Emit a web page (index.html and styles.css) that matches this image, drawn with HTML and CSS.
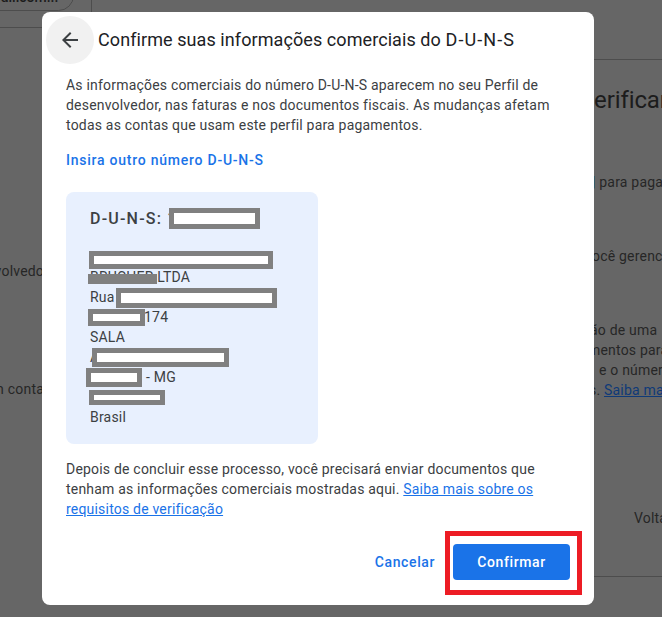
FILE: index.html
```html
<!DOCTYPE html>
<html lang="pt-BR">
<head>
<meta charset="utf-8">
<title>Confirme suas informações comerciais do D-U-N-S</title>
<link rel="stylesheet" href="styles.css">
</head>
<body>
<div class="page">
  <div class="backdrop" aria-hidden="true">
    <div class="bg-pill"><span class="bg-pill-text">ailicom...</span></div>
    <div class="bg-vline"></div>
    <div class="bg-hline-left"></div>
    <div class="bg-hline-top"></div>
    <div class="bg-hline-bottom"></div>
    <div class="bg-text bg-l1">desenvolvedor</div>
    <div class="bg-text bg-l2">em conta</div>
    <div class="bg-text bg-heading">erificar</div>
    <div class="bg-text bg-r1"><span class="bg-blue">|</span> para pagamentos</div>
    <div class="bg-text bg-r2">ocê gerencia</div>
    <div class="bg-text bg-r3">ão de uma</div>
    <div class="bg-text bg-r4">mentos para</div>
    <div class="bg-text bg-r5">e o número</div>
    <div class="bg-text bg-r6">s. <span class="bg-link">Saiba mais</span></div>
    <div class="bg-text bg-volta">Voltar</div>
  </div>

  <section class="dialog">
    <header class="dialog-header">
      <button class="back" aria-label="Voltar">
        <svg width="24" height="24" viewBox="0 0 24 24"><path d="M20 11H7.83l5.59-5.59L12 4l-8 8 8 8 1.41-1.41L7.83 13H20v-2z"/></svg>
      </button>
      <h1 class="title">Confirme suas informações comerciais do <span class="title-duns">D-U-N-S</span></h1>
    </header>
    <div class="dialog-body">
      <p class="intro">As informações comerciais do número D-U-N-S aparecem no seu Perfil de desenvolvedor, nas faturas e nos documentos fiscais. As mudanças afetam todas as contas que usam este perfil para pagamentos.</p>
      <a class="other-link">Insira outro número D-U-N-S</a>
      <div class="card">
        <div class="duns">D-U-N-S: 1</div>
        <div class="address">
          <div>&nbsp;</div>
          <div>BRUCHER LTDA</div>
          <div>Rua</div>
          <div class="after-r5">174</div>
          <div>SALA</div>
          <div>A</div>
          <div class="after-r7">- MG</div>
          <div>&nbsp;</div>
          <div>Brasil</div>
        </div>
        <span class="redact r1"></span>
        <span class="redact r2"></span>
        <span class="redact-solid r3"></span>
        <span class="redact r4"></span>
        <span class="redact r5"></span>
        <span class="redact r6"></span>
        <span class="redact r7"></span>
        <span class="redact r8"></span>
      </div>
      <p class="note">Depois de concluir esse processo, você precisará enviar documentos que tenham as informações comerciais mostradas aqui. <a class="note-link">Saiba mais sobre os requisitos de verificação</a></p>
    </div>
    <footer class="dialog-actions">
      <button class="btn-text">Cancelar</button>
      <button class="btn-primary">Confirmar</button>
      <span class="highlight"></span>
    </footer>
  </section>
</div>
</body>
</html>
```

FILE: styles.css
```css
* { box-sizing: border-box; }
html, body { margin: 0; padding: 0; }
body { font-family: Roboto, "Liberation Sans", sans-serif; }

.page {
  position: relative;
  width: 662px;
  height: 617px;
  overflow: hidden;
  background: #666;
  padding: 12px 0 0 42px;
}

.backdrop { position: absolute; inset: 0; }
.bg-text {
  position: absolute;
  font: 400 14px/20px Roboto, sans-serif;
  letter-spacing: .2px;
  color: #262626;
  white-space: pre;
}
.bg-l1 { right: 613px; top: 261px; }
.bg-l2 { right: 618px; top: 379px; }
.bg-heading { left: 594px; top: 84px; font: 400 24px/32px Roboto, sans-serif; letter-spacing: -.1px; color: #1c1c1c; }
.bg-r1 { left: 592px; top: 172px; }
.bg-blue { color: #123a78; }
.bg-r2 { left: 592px; top: 246px; }
.bg-r3 { left: 590px; top: 320px; }
.bg-r4 { left: 588px; top: 340px; }
.bg-r5 { left: 599px; top: 360px; }
.bg-r6 { left: 589px; top: 380px; }
.bg-link { color: #0f3a78; text-decoration: underline; }
.bg-volta { left: 634px; top: 508px; }
.bg-pill {
  position: absolute;
  left: -20px; top: -20px;
  width: 94px; height: 31px;
  border: 1px solid #4d4d4d;
  border-radius: 16px;
  overflow: hidden;
}
.bg-pill-text {
  position: absolute;
  left: 20px; top: 6px;
  font: 500 14px/20px Roboto, sans-serif;
  color: #1c1c1c;
}
.bg-vline { position: absolute; left: 91px; top: 0; width: 1px; height: 12px; background: #4d4d4d; }
.bg-hline-left { position: absolute; left: 0; top: 27px; width: 42px; height: 1px; background: #4d4d4d; }
.bg-hline-top { position: absolute; left: 594px; top: 59px; right: 0; height: 1px; background: #4d4d4d; }
.bg-hline-bottom { position: absolute; left: 594px; top: 576px; right: 0; height: 1px; background: #4d4d4d; }

.dialog {
  position: relative;
  width: 552px;
  height: 593px;
  background: #fff;
  border-radius: 8px;
  display: flex;
  flex-direction: column;
}
.dialog-header {
  display: flex;
  align-items: center;
  gap: 4px;
  padding: 4px 0 0 4px;
}
.back {
  width: 48px;
  height: 48px;
  flex: none;
  border: 0;
  border-radius: 50%;
  background: #f1f1f1;
  display: flex;
  align-items: center;
  justify-content: center;
  padding: 0;
}
.back svg { fill: #3c4043; }
.title {
  margin: 0;
  font: 400 18px/24px Roboto, sans-serif;
  letter-spacing: .08px;
  color: #202124;
  white-space: nowrap;
}
.title-duns { letter-spacing: 1.1px; }
.dialog-body {
  padding: 11px 24px 0;
  flex: 1;
}
.intro {
  margin: 0 0 15px;
  font-size: 14px;
  line-height: 20px;
  letter-spacing: .2px;
  color: #3c4043;
}
.other-link {
  display: block;
  font-size: 14px;
  line-height: 20px;
  font-weight: 500;
  letter-spacing: .76px;
  color: #1a73e8;
}
.card {
  position: relative;
  margin-top: 22px;
  width: 252px;
  height: 252px;
  background: #e8f0fe;
  border-radius: 8px;
  padding: 17px 24px 0;
  color: #3c4043;
}
.duns {
  font-size: 16px;
  line-height: 20px;
  font-weight: 500;
  letter-spacing: 1.2px;
}
.address {
  margin-top: 18px;
  font-size: 14px;
  line-height: 20px;
  letter-spacing: .2px;
}
.after-r5 { padding-left: 54px; }
.after-r7 { padding-left: 56px; }
.redact, .redact-solid { position: absolute; background: #fff; border: 5px solid #808080; }
.redact-solid { background: #808080; border: 0; }
/* offsets below are measured from the card's top-left (66, 192) */
.r1 { left: 103px; top: 16px; width: 91px; height: 21px; }
.r2 { left: 23px; top: 59px; width: 184px; height: 18px; }
.r3 { left: 22px; top: 82px; width: 69px; height: 10px; }
.r4 { left: 50px; top: 96px; width: 161px; height: 20px; }
.r5 { left: 22px; top: 117px; width: 57px; height: 17px; }
.r6 { left: 26px; top: 156px; width: 137px; height: 19px; }
.r7 { left: 20px; top: 176px; width: 56px; height: 19px; }
.r8 { left: 23px; top: 198px; width: 76px; height: 15px; }
.note {
  margin: 15px 0 0;
  font-size: 14px;
  line-height: 20px;
  letter-spacing: .2px;
  color: #3c4043;
}
.note-link { color: #1a73e8; text-decoration: underline; }
.dialog-actions {
  position: relative;
  display: flex;
  justify-content: flex-end;
  align-items: center;
  gap: 18px;
  padding: 0 24px 25px;
}
.btn-text {
  border: 0;
  background: none;
  padding: 0;
  font: 500 14px/20px Roboto, sans-serif;
  letter-spacing: .6px;
  color: #1a73e8;
}
.btn-primary {
  width: 117px;
  height: 36px;
  border: 0;
  border-radius: 4px;
  background: #1a73e8;
  color: #fff;
  font: 500 14px/20px Roboto, sans-serif;
  letter-spacing: .6px;
  padding: 0;
}
.highlight {
  position: absolute;
  right: 12px;
  bottom: 10px;
  width: 137px;
  height: 64px;
  border: 5px solid #ed1c24;
}
```
